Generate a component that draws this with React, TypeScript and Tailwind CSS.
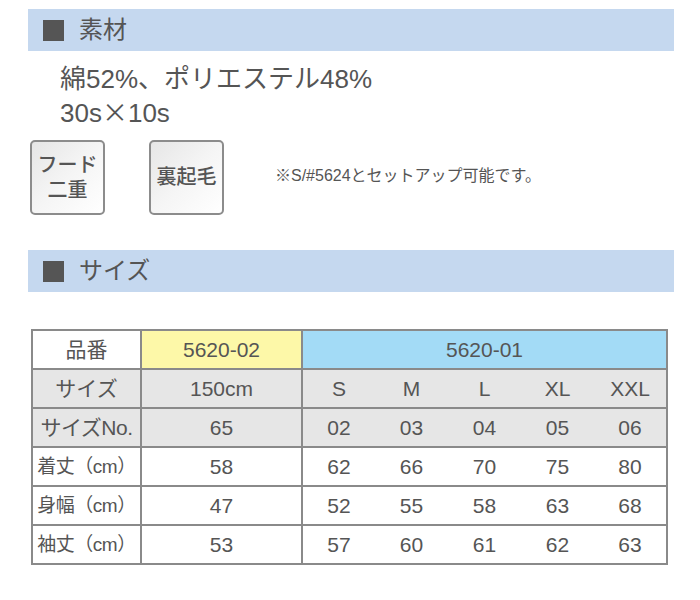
import React from "react";

const font = { fontFamily: '"Liberation Sans", "Noto Sans CJK JP", sans-serif' };
const cjk = { fontFamily: '"Noto Sans CJK JP", sans-serif' };

const SectionHeader = ({ title }: { title: string }) => (
  <div className="flex h-[42px] w-[646px] items-center bg-[#c5d8ef] pl-[15px]">
    <span className="h-[21px] w-[21px] bg-[#555555]" />
    <span className="ml-[15px] text-[24px] leading-none text-[#555555]">{title}</span>
  </div>
);

const Badge = ({ children }: { children: React.ReactNode }) => (
  <div className="flex h-[75px] w-[75px] items-center justify-center rounded-[5px] border-2 border-[#8c8c8c] bg-gradient-to-br from-[#e6e6e6] via-[#f5f5f5] to-white text-center text-[20px] leading-[25px] font-medium text-[#555555]">
    {children}
  </div>
);

const sizes = ["S", "M", "L", "XL", "XXL"];
const rows = [
  { label: "サイズNo.", kid: "65", vals: ["02", "03", "04", "05", "06"], gray: true },
  { label: "着丈（cm）", kid: "58", vals: ["62", "66", "70", "75", "80"], small: true },
  { label: "身幅（cm）", kid: "47", vals: ["52", "55", "58", "63", "68"], small: true },
  { label: "袖丈（cm）", kid: "53", vals: ["57", "60", "61", "62", "63"], small: true },
];

const cell = "border-2 border-[#8a8a8a] h-[39px] p-0 text-center align-middle";
// size columns under 5620-01 have no vertical rules between them
const sub = (i: number) =>
  `${cell} ${i === 0 ? "" : "border-l-0"} ${i === 4 ? "" : "border-r-0"}`;

export default function App() {
  return (
    <div className="h-[600px] w-[700px] bg-white text-[#555555]" style={font}>
      <div className="pl-[28px] pt-[9px]">
        <SectionHeader title="素材" />
        <div className="pl-[32px] pt-[13px] text-[26px] leading-[31px]">
          <div className="h-[31px]">綿52%、ポリエステル48%</div>
          <div className="h-[31px]">
            30s<span style={cjk}>×</span>10s
          </div>
        </div>
        <div className="mt-[14px] flex items-center pl-[2px]">
          <Badge>
            フード
            <br />
            二重
          </Badge>
          <div className="ml-[44px]">
            <Badge>裏起毛</Badge>
          </div>
          <div className="ml-[51px] -mt-[4px] text-[16px] text-[#555555]">※S/#5624とセットアップ可能です。</div>
        </div>
        <div className="mt-[35px]">
          <SectionHeader title="サイズ" />
        </div>
        <table className="ml-[3px] mt-[37px] w-[637px] table-fixed border-collapse text-[21px] leading-none">
          <colgroup>
            <col className="w-[109px]" />
            <col className="w-[161px]" />
            <col />
            <col />
            <col />
            <col />
            <col />
          </colgroup>
          <tbody>
            <tr>
              <td className={`${cell} bg-white`}>品番</td>
              <td className={`${cell} bg-[#fdf8a8]`}>5620-02</td>
              <td colSpan={5} className={`${cell} bg-[#a3dbf6]`}>
                5620-01
              </td>
            </tr>
            <tr className="bg-[#e6e6e6]">
              <td className={cell}>サイズ</td>
              <td className={cell}>150cm</td>
              {sizes.map((s, i) => (
                <td key={s} className={sub(i)}>
                  {s}
                </td>
              ))}
            </tr>
            {rows.map((r) => (
              <tr key={r.label} className={r.gray ? "bg-[#e6e6e6]" : "bg-white"}>
                <td
                  className={`${cell} whitespace-nowrap tracking-[-0.5px] ${r.small ? "text-[19px]" : ""}`}
                >
                  {r.label}
                </td>
                <td className={cell}>{r.kid}</td>
                {r.vals.map((v, i) => (
                  <td key={i} className={sub(i)}>
                    {v}
                  </td>
                ))}
              </tr>
            ))}
          </tbody>
        </table>
      </div>
    </div>
  );
}
